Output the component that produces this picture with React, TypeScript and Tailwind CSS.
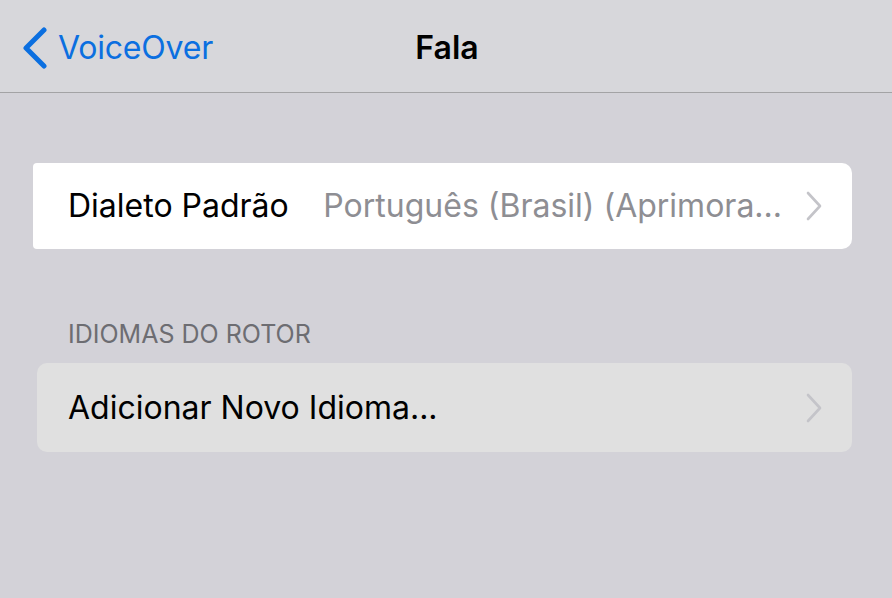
const font = { fontFamily: "Inter, 'Noto Sans', sans-serif" };

function Chevron() {
  return (
    <svg width="18" height="30" viewBox="0 0 18 30" fill="none" className="shrink-0 text-[#c4c4c9]">
      <path d="M3 2 L15 15 L3 28" stroke="currentColor" strokeWidth="2.6" strokeLinecap="round" strokeLinejoin="round" />
    </svg>
  );
}

function Row({
  label,
  value,
  className,
}: {
  label: string;
  value?: string;
  className: string;
}) {
  return (
    <div className={`flex items-center pl-[35px] pr-[29px] ${className}`}>
      <span className="text-[32px] leading-[40px] text-black whitespace-nowrap">{label}</span>
      <span className="flex-1 text-right text-[32px] leading-[40px] text-[#8e8e93] whitespace-nowrap overflow-hidden pl-6 pr-[23px]">
        {value}
      </span>
      <Chevron />
    </div>
  );
}

export default function App() {
  return (
    <div className="w-[892px] h-[598px] bg-[#d3d2d8] flex flex-col" style={font}>
      <div className="h-[93px] bg-[#d7d7db] border-b border-[#a3a3a5] flex items-center relative pt-[4px]">
        <div className="flex items-center pl-[20px] text-[#0b6fe0]">
          <svg width="30" height="42" viewBox="0 0 30 42" fill="none">
            <path d="M24 3 L6 21 L24 39" stroke="currentColor" strokeWidth="5" strokeLinecap="round" strokeLinejoin="round" />
          </svg>
          <span className="text-[32px] leading-[40px] ml-[8px] tracking-[-0.2px]">VoiceOver</span>
        </div>
        <div className="absolute left-0 right-0 pl-[2px] text-center text-[32px] leading-[40px] font-semibold text-black pointer-events-none">
          Fala
        </div>
      </div>
      <div className="pt-[70px] pl-[33px] pr-[40px]">
        <Row
          label="Dialeto Padrão"
          value="Português (Brasil) (Aprimora..."
          className="h-[86px] bg-white rounded-r-[10px] rounded-l-[4px]"
        />
      </div>
      <div className="pl-[68px] pt-[70px] pb-[14px] text-[25px] leading-[30px] text-[#6d6d72]">
        IDIOMAS DO ROTOR
      </div>
      <div className="pl-[37px] pr-[40px]">
        <Row
          label="Adicionar Novo Idioma..."
          className="h-[89px] bg-[#e0e0e0] rounded-[10px] !pl-[31px]"
        />
      </div>
    </div>
  );
}
